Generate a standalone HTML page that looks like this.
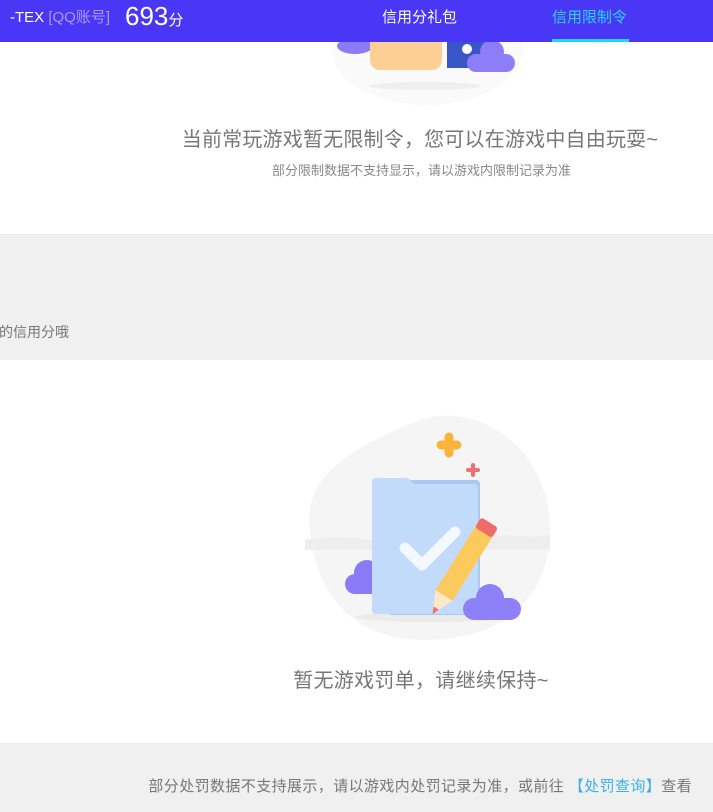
<!DOCTYPE html>
<html><head><meta charset="utf-8"><style>
*{margin:0;padding:0;box-sizing:border-box}
body{width:713px;height:812px;overflow:hidden;background:#fff;font-family:"Liberation Sans","Noto Sans CJK SC",sans-serif;position:relative}
.abs{position:absolute;white-space:nowrap}
</style></head><body>
<!-- top illustration -->
<svg class="abs" style="left:300px;top:30px" width="240" height="80">
<ellipse cx="127" cy="20" rx="95" ry="55" fill="#fafafa"/>
<ellipse cx="125" cy="56" rx="56" ry="4" fill="#efefef"/>
<ellipse cx="55" cy="16" rx="18" ry="8" fill="#8b7cf5"/>
<rect x="70" y="0" width="72" height="40" rx="10" fill="#fdcf94"/>
<rect x="147" y="5" width="38" height="33" fill="#3a55c8"/>
<ellipse cx="167" cy="19" rx="5" ry="5" fill="#fff"/>
<circle cx="192" cy="22" r="12" fill="#8d7ef7"/>
<rect x="167" y="24" width="48" height="18" rx="9" fill="#8d7ef7"/>
</svg>
<div class="abs" style="left:0;top:0;width:713px;height:42px;background:#4a37f5"></div>
<div class="abs" style="left:10px;top:8px;font-size:15px;color:#fff;line-height:20px">-TEX <span style="color:#a59cf7">[QQ账号]</span></div>
<div class="abs" style="left:125px;top:1px;font-size:26px;color:#fff;line-height:30px">693<span style="font-size:15px">分</span></div>
<div class="abs" style="left:382px;top:8px;font-size:15px;color:#fff;line-height:20px">信用分礼包</div>
<div class="abs" style="left:552px;top:8px;font-size:15px;color:#27d6f2;line-height:20px">信用限制令</div>
<div class="abs" style="left:552px;top:39px;width:77px;height:3px;background:#27d6f2"></div>
<div class="abs" style="left:0;width:840px;text-align:center;top:127px;font-size:20px;color:#777;line-height:26px;letter-spacing:0.2px">当前常玩游戏暂无限制令，您可以在游戏中自由玩耍~</div>
<div class="abs" style="left:0;width:843px;text-align:center;top:162px;font-size:13px;color:#888;line-height:18px">部分限制数据不支持显示，请以游戏内限制记录为准</div>
<div class="abs" style="left:0;top:234px;width:713px;height:126px;background:#f0f0f0;border-top:1px solid #e8e8e8"></div>
<div class="abs" style="left:-1px;top:322px;font-size:14px;color:#777;line-height:20px">的信用分哦</div>
<!-- main illustration -->
<svg class="abs" style="left:300px;top:410px" width="260" height="235">
<path d="M10 120 C0 60 70 30 120 10 C180 -10 250 40 250 120 C250 190 200 230 125 230 C50 230 15 180 10 120Z" fill="#f5f5f5"/>
<path d="M5 130 C60 120 80 140 130 128 C180 118 210 130 250 125 L250 140 L5 140Z" fill="#eeeeee"/>
<ellipse cx="130" cy="207" rx="75" ry="5" fill="#ebebeb"/>
<circle cx="67" cy="163" r="13" fill="#8a7af5"/>
<rect x="45" y="164" width="40" height="20" rx="10" fill="#8a7af5"/>
<rect x="88" y="70" width="92" height="135" rx="4" fill="#a9c9f2"/>
<path d="M72 72 Q72 68 76 68 L108 68 L114 74 L174 74 Q178 74 178 78 L178 200 Q178 204 174 204 L76 204 Q72 204 72 200Z" fill="#c3dbfb"/>
<path d="M105 138 L122 155 L155 122" stroke="#f4f8ff" stroke-width="11" fill="none" stroke-linecap="round" stroke-linejoin="round"/>
<g transform="rotate(32 160 160)">
<rect x="150" y="110" width="20" height="80" fill="#fbc95c"/>
<rect x="150" y="104" width="20" height="12" rx="3" fill="#f06b6b"/>
<path d="M150 190 L170 190 L160 212Z" fill="#fde7c7"/>
<path d="M157 205 L163 205 L160 212Z" fill="#f06b6b"/>
</g>
<circle cx="190" cy="188" r="14" fill="#8e80f7"/>
<rect x="163" y="188" width="58" height="22" rx="11" fill="#8e80f7"/>
<path d="M141 35 h16 M149 27 v16" stroke="#fbb43a" stroke-width="9" stroke-linecap="round"/>
<path d="M168 60 h10 M173 55 v10" stroke="#f07070" stroke-width="4" stroke-linecap="round"/>
</svg>
<div class="abs" style="left:0;width:842px;text-align:center;top:668px;font-size:20px;color:#777;line-height:26px;letter-spacing:0.3px">暂无游戏罚单，请继续保持~</div>
<div class="abs" style="left:0;top:743px;width:713px;height:69px;background:#f0f0f0"></div>
<div class="abs" style="right:21px;top:777px;font-size:15px;color:#777;line-height:20px;letter-spacing:0.4px">部分处罚数据不支持展示，请以游戏内处罚记录为准，或前往 <span style="color:#3ab0ea">【处罚查询】</span>查看</div>
</body></html>
